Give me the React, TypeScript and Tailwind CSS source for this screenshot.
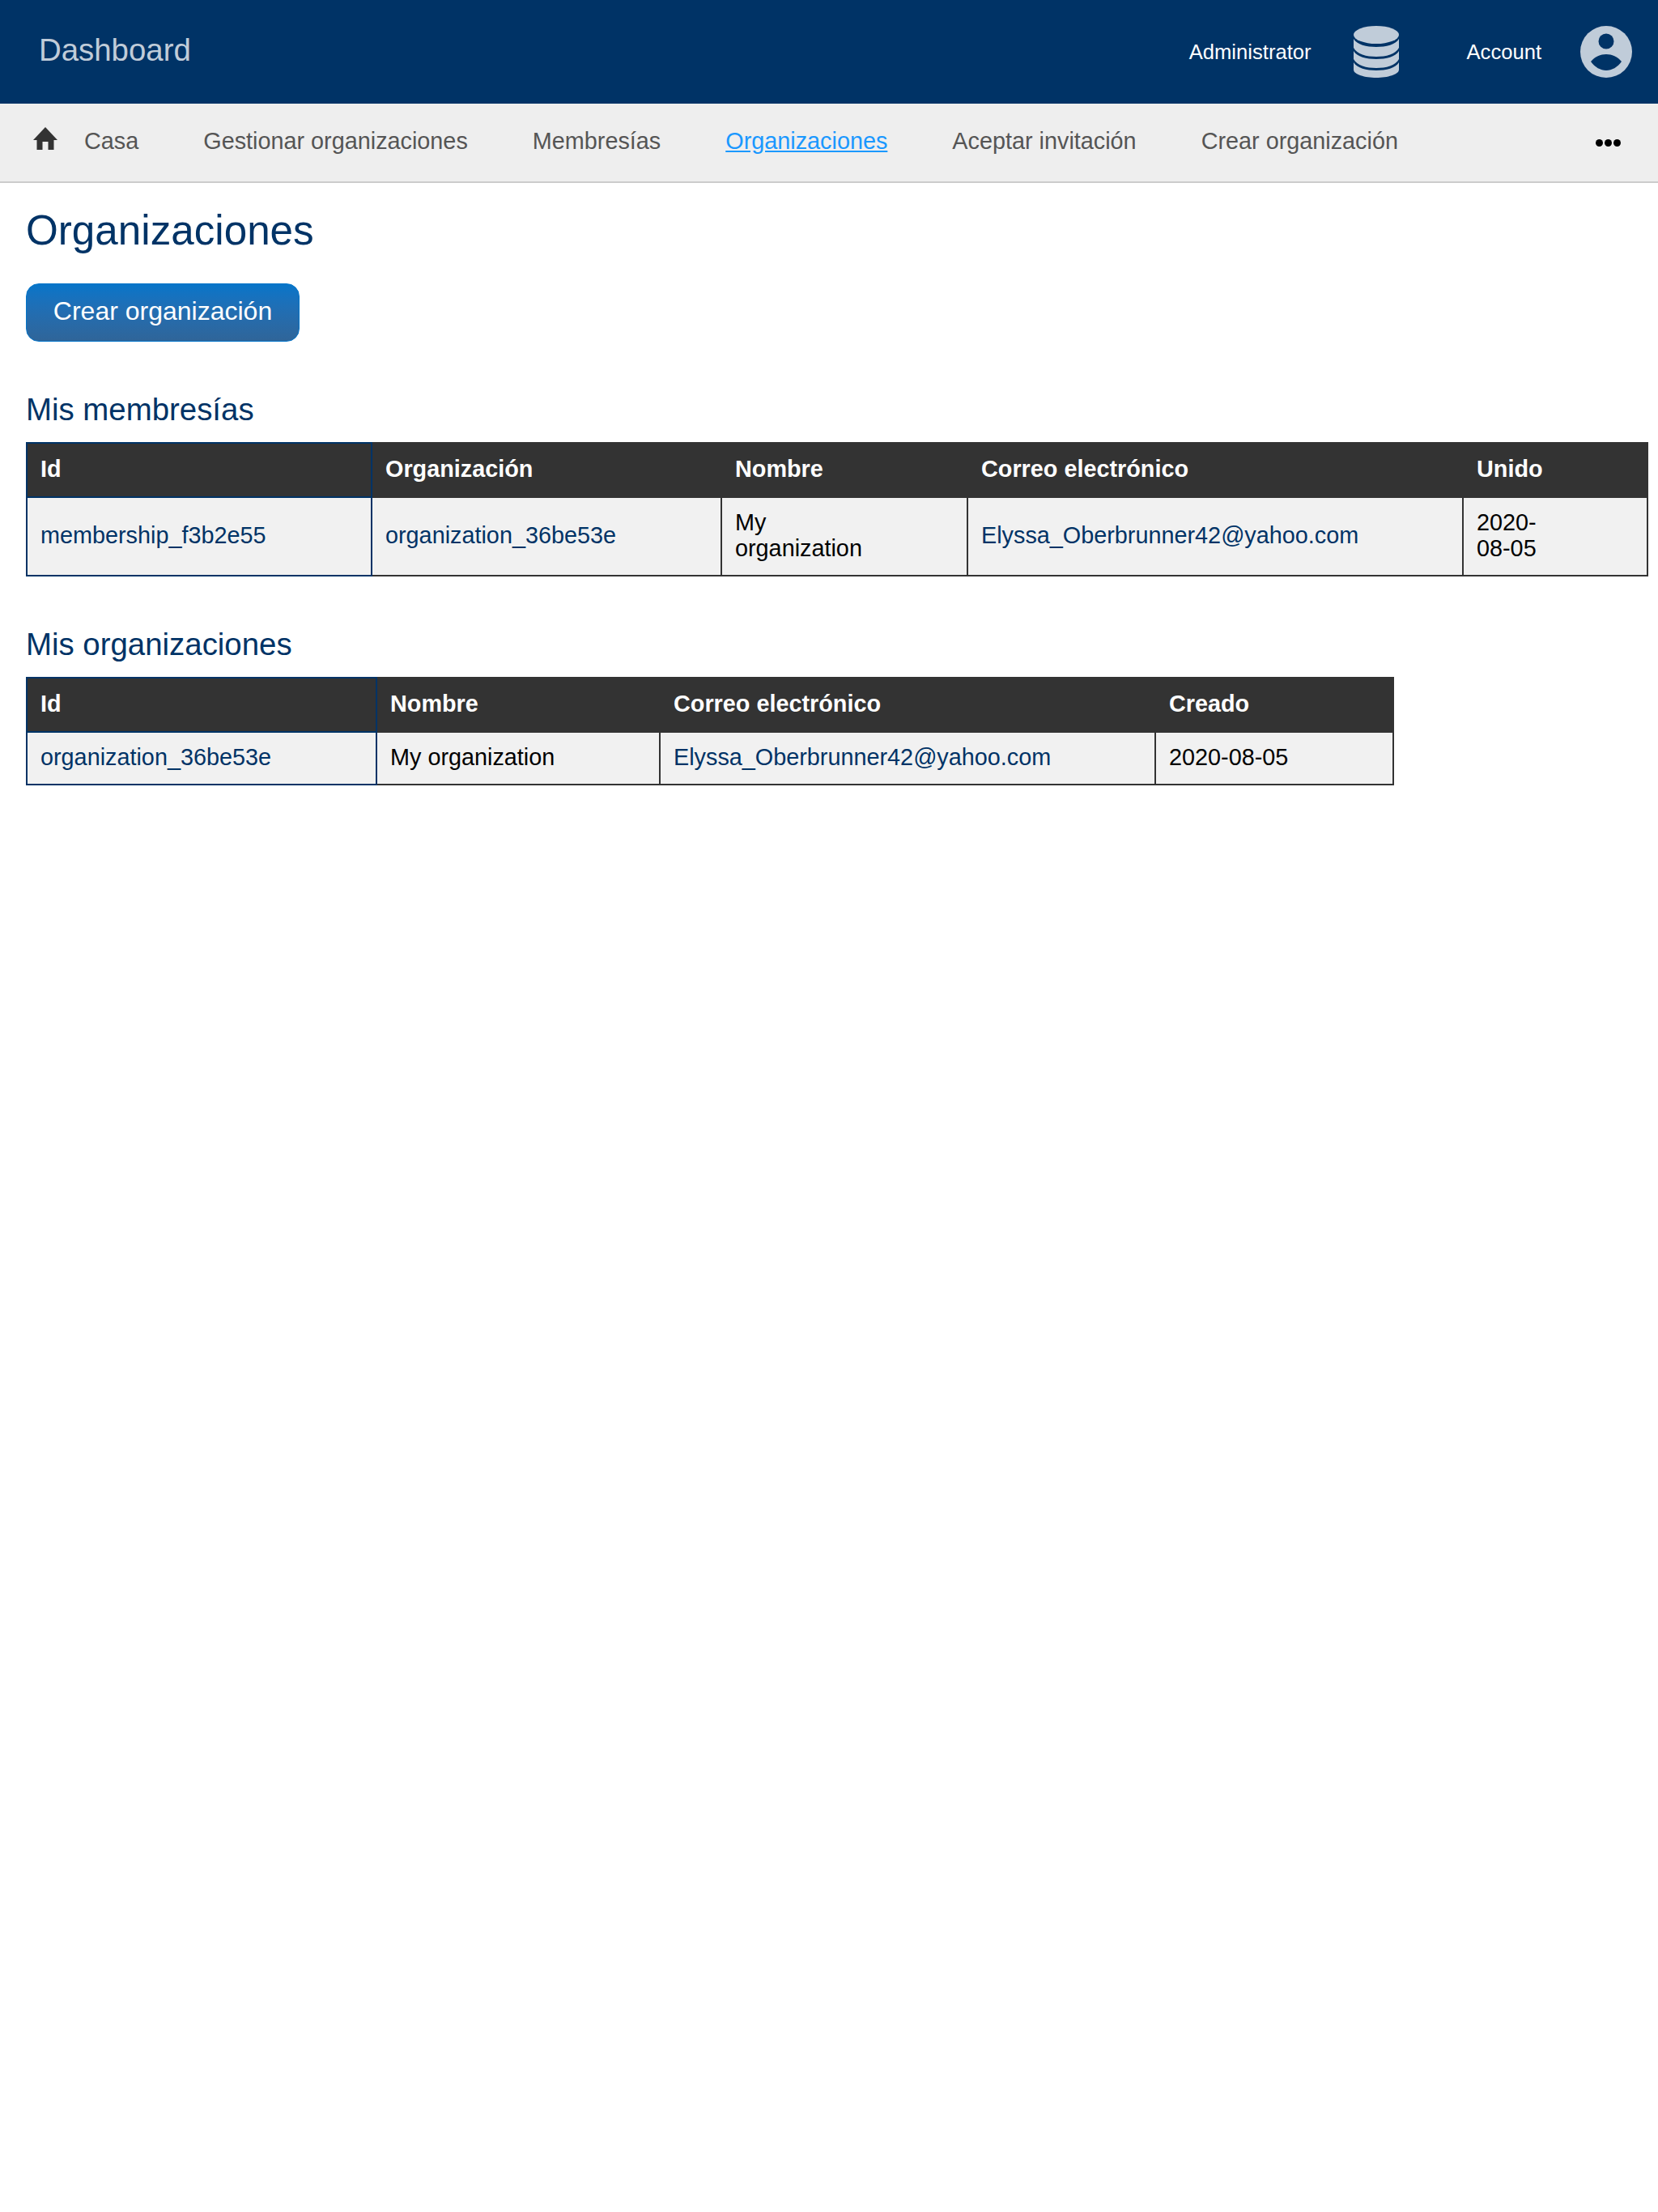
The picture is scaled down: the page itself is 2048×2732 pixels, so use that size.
import React from "react";

const navItems = ["Gestionar organizaciones", "Membresías", "Organizaciones", "Aceptar invitación", "Crear organización"];

const HomeIcon = () => (
  <svg viewBox="0 0 32 32" className="w-8 h-8 fill-[#333333] -mt-[8px]">
    <path d="M16 2 L31 18 H26.5 V30 H19.5 V20 H12.5 V30 H5.5 V18 H1 Z" />
  </svg>
);

const DatabaseIcon = () => (
  <svg viewBox="0 0 56 64" className="w-14 h-16 fill-[#c0ccd9]">
    <ellipse cx="28" cy="11" rx="28" ry="11" />
    <path d="M0 16 C4 23 16 26 28 26 C40 26 52 23 56 16 V27 C52 35 40 38 28 38 C16 38 4 35 0 27 Z" />
    <path d="M0 31 C4 38 16 41 28 41 C40 41 52 38 56 31 V41 C52 49 40 52 28 52 C16 52 4 49 0 41 Z" />
    <path d="M0 45 C4 52 16 55 28 55 C40 55 52 52 56 45 V54 C56 60 42 64 28 64 C14 64 0 60 0 54 Z" />
  </svg>
);

const AccountIcon = () => (
  <svg viewBox="0 0 64 64" className="w-16 h-16">
    <circle cx="32" cy="32" r="32" fill="#c0ccd9" />
    <circle cx="32" cy="19" r="9.5" fill="#003366" />
    <path d="M13 44 C18 38 25 35 32 35 C39 35 46 38 51 44 C46 51 39 55 32 55 C25 55 18 51 13 44 Z" fill="#003366" />
  </svg>
);

const cellBase = "border-2 px-4 align-middle text-left";

const Th = ({ first, width, children }: { first?: boolean; width: string; children: React.ReactNode }) => (
  <th className={`${cellBase} ${width} h-[67px] pt-0 pb-[4px] bg-[#333333] text-white font-bold ${first ? "border-[#003366]" : "border-[#333333]"}`}>
    {children}
  </th>
);

const Td = ({ first, children }: { first?: boolean; children: React.ReactNode }) => (
  <td className={`${cellBase} pt-[14px] pb-[17px] bg-[#f1f1f1] text-black ${first ? "border-[#003366]" : "border-[#333333]"}`}>
    {children}
  </td>
);

const Link = ({ children }: { children: React.ReactNode }) => <a className="text-[#003366]">{children}</a>;

export default function App() {
  return (
    <div className="min-h-[2732px] bg-white font-['Liberation_Sans',Arial,sans-serif] text-[28.8px]">
      <header className="h-32 bg-[#003366] flex items-center pl-12 pr-8">
        <div className="text-[38.4px] text-[#c0ccd9] flex-1 -mt-1">Dashboard</div>
        <span className="text-[25.6px] text-white mr-[52px]">Administrator</span>
        <DatabaseIcon />
        <span className="text-[25.6px] text-white ml-[84px] mr-12">Account</span>
        <AccountIcon />
      </header>

      <nav className="h-[98px] bg-[#eeeeee] border-b-2 border-[#cccccc] flex items-center pl-10 pr-[46px] pb-[3px] text-[#555555]">
        <HomeIcon />
        <span className="ml-[32px]">Casa</span>
        {navItems.map((item) => (
          <span key={item} className={`ml-20 ${item === "Organizaciones" ? "text-[#1a98ff] underline" : ""}`}>
            {item}
          </span>
        ))}
        <span className="ml-auto flex gap-[2px] mt-[3px]">
          <i className="w-[9px] h-[9px] rounded-full bg-black" />
          <i className="w-[9px] h-[9px] rounded-full bg-black" />
          <i className="w-[9px] h-[9px] rounded-full bg-black" />
        </span>
      </nav>

      <main className="px-8 pt-[27px]">
        <h1 className="text-[51.2px] leading-[64px] text-[#003366]">Organizaciones</h1>
        <button className="mt-[33px] w-[338px] h-[72px] pb-[5px] rounded-2xl border border-[#0575c9] bg-gradient-to-b from-[#0575c9] to-[#2f6599] text-white text-[32px]">
          Crear organización
        </button>

        <h2 className="mt-[59px] text-[38.4px] leading-[50px] text-[#003366]">Mis membresías</h2>
        <table className="mt-[15px] border-collapse table-fixed w-[2002px] leading-[32px]">
          <thead>
            <tr>
              <Th first width="w-[426px]">Id</Th>
              <Th width="w-[432px]">Organización</Th>
              <Th width="w-[304px]">Nombre</Th>
              <Th width="w-[612px]">Correo electrónico</Th>
              <Th width="w-[228px]">Unido</Th>
            </tr>
          </thead>
          <tbody>
            <tr>
              <Td first><Link>membership_f3b2e55</Link></Td>
              <Td><Link>organization_36be53e</Link></Td>
              <Td>My<br />organization</Td>
              <Td><Link>Elyssa_Oberbrunner42@yahoo.com</Link></Td>
              <Td>2020-<br />08-05</Td>
            </tr>
          </tbody>
        </table>

        <h2 className="mt-[59px] text-[38.4px] leading-[50px] text-[#003366]">Mis organizaciones</h2>
        <table className="mt-[15px] border-collapse table-fixed w-[1688px] leading-[32px]">
          <thead>
            <tr>
              <Th first width="w-[432px]">Id</Th>
              <Th width="w-[350px]">Nombre</Th>
              <Th width="w-[612px]">Correo electrónico</Th>
              <Th width="w-[294px]">Creado</Th>
            </tr>
          </thead>
          <tbody>
            <tr>
              <Td first><Link>organization_36be53e</Link></Td>
              <Td>My organization</Td>
              <Td><Link>Elyssa_Oberbrunner42@yahoo.com</Link></Td>
              <Td>2020-08-05</Td>
            </tr>
          </tbody>
        </table>
      </main>
    </div>
  );
}
